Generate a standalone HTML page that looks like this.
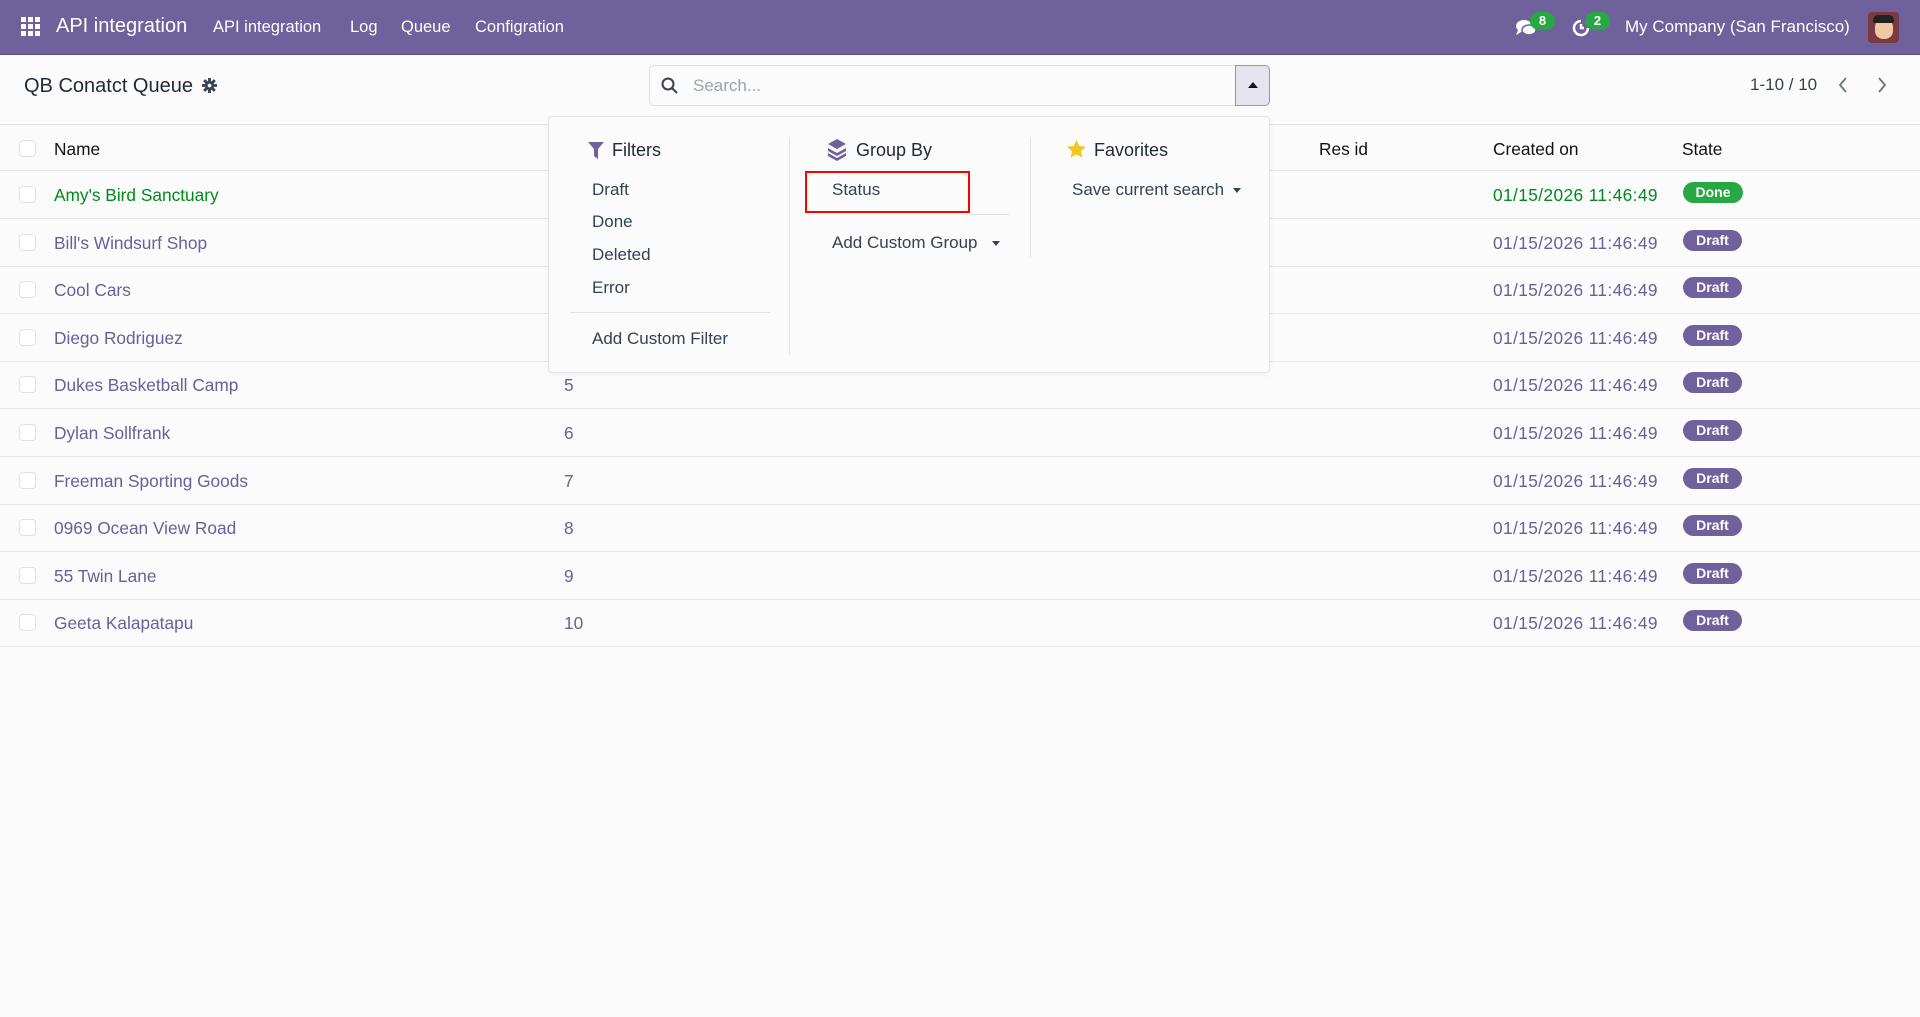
<!DOCTYPE html>
<html><head><meta charset="utf-8"><style>
*{box-sizing:border-box;margin:0;padding:0}
body{width:1920px;height:1017px;background:#fbfbfc;font-family:"Liberation Sans",sans-serif;color:#374151;position:relative;overflow:hidden}
.a{position:absolute;white-space:nowrap}
.nav{position:absolute;left:0;top:0;width:1920px;height:55px;background:#6f619b;border-bottom:1px solid #5c4f85}
.nav .a{color:#fff;font-size:16.5px;top:18px}
.row{position:absolute;left:0;width:1920px;height:48px;border-bottom:1px solid #e5e5ea;font-size:17.3px}
.row .a{top:14px}
.dt{letter-spacing:0.4px}
.cb{position:absolute;left:19px;top:15px;width:17px;height:17px;border:1px solid #e2e2e6;border-radius:4px;background:#fff}
.pu{color:#6b5e9a}
.gr{color:#008a1c}
.badge{position:absolute;left:1683px;top:11px;height:21px;border-radius:11px;color:#fff;font-size:14px;font-weight:bold;line-height:21px;text-align:center}
.dd{position:absolute;left:548px;top:116px;width:722px;height:257px;background:#fbfbfc;border:1px solid #e4e4e8;border-radius:4px;box-shadow:0 2px 6px rgba(0,0,0,.05)}
.dd .a{font-size:17px;color:#374151}
.bd{position:absolute;background:#e4e4e8}
</style></head><body>
<div class="nav">
<svg class="a" style="left:21px;top:17px" width="19" height="19" viewBox="0 0 19 19" fill="#fff"><rect x="0" y="0" width="5" height="5"/><rect x="7" y="0" width="5" height="5"/><rect x="14" y="0" width="5" height="5"/><rect x="0" y="7" width="5" height="5"/><rect x="7" y="7" width="5" height="5"/><rect x="14" y="7" width="5" height="5"/><rect x="0" y="14" width="5" height="5"/><rect x="7" y="14" width="5" height="5"/><rect x="14" y="14" width="5" height="5"/></svg>
<div class="a" style="left:56px;top:15px;font-size:20px">API integration</div>
<div class="a" style="left:213px">API integration</div>
<div class="a" style="left:350px">Log</div>
<div class="a" style="left:401px">Queue</div>
<div class="a" style="left:475px">Configration</div>
<svg class="a" style="left:1515px;top:18px" width="22" height="20" viewBox="0 0 22 20" fill="#fff"><ellipse cx="9" cy="8" rx="8" ry="6"/><path d="M3 12 L1 17 L8 13Z"/><ellipse cx="14" cy="12" rx="7" ry="5" fill="#fff" stroke="#6f619b" stroke-width="1.5"/></svg>
<div class="a" style="left:1530px;top:12px;background:#28a745;border-radius:10px;width:25px;height:18px;font-size:13px;font-weight:bold;text-align:center;line-height:18px">8</div>
<svg class="a" style="left:1571px;top:18px" width="20" height="20" viewBox="0 0 20 20" fill="none" stroke="#fff" stroke-width="2.5"><path d="M17 10 A7 7 0 1 1 10 3"/><path d="M10 6 V10 H13"/></svg>
<div class="a" style="left:1585px;top:12px;background:#28a745;border-radius:10px;width:25px;height:18px;font-size:13px;font-weight:bold;text-align:center;line-height:18px">2</div>
<div class="a" style="left:1625px;top:17px;font-size:17px">My Company (San Francisco)</div>
<div class="a" style="left:1868px;top:12px;width:31px;height:31px;border-radius:4px;background:#7a3a44;overflow:hidden"><div style="position:absolute;left:7px;top:7px;width:18px;height:20px;border-radius:8px;background:#f1c9a0"></div><div style="position:absolute;left:5px;top:3px;width:21px;height:8px;border-radius:5px 5px 2px 2px;background:#222"></div></div>
</div>
<div class="a" style="left:24px;top:75px;font-size:20px;color:#1f2937">QB Conatct Queue</div>
<svg class="a" style="left:202px;top:78px" width="15" height="15" viewBox="0 0 16 16" fill="#374151"><circle cx="8" cy="8" r="5"/><g stroke="#374151" stroke-width="3"><path d="M8 0v16M0 8h16M2.3 2.3l11.4 11.4M13.7 2.3L2.3 13.7"/></g><circle cx="8" cy="8" r="2" fill="#fbfbfc"/></svg>
<div class="a" style="left:649px;top:65px;width:621px;height:41px;border:1px solid #dedee3;border-radius:5px;background:#fbfbfc"></div>
<svg class="a" style="left:661px;top:77px" width="17" height="17" viewBox="0 0 17 17" fill="none" stroke="#374151" stroke-width="2"><circle cx="7" cy="7" r="5.5"/><path d="M11 11l5 5"/></svg>
<div class="a" style="left:693px;top:76px;font-size:17px;color:#9ca3af">Search...</div>
<div class="a" style="left:1235px;top:65px;width:35px;height:41px;background:#e5e3ee;border:1px solid #9a93b8;border-radius:0 5px 5px 0"></div>
<div class="a" style="left:1248px;top:82px;width:0;height:0;border-left:5px solid transparent;border-right:5px solid transparent;border-bottom:6px solid #111"></div>
<div class="a" style="left:1750px;top:75px;font-size:17px;color:#374151">1-10 / 10</div>
<svg class="a" style="left:1837px;top:76px" width="12" height="18" viewBox="0 0 12 18" fill="none" stroke="#6b7280" stroke-width="1.8"><path d="M9 2L3 9l6 7"/></svg>
<svg class="a" style="left:1876px;top:76px" width="12" height="18" viewBox="0 0 12 18" fill="none" stroke="#6b7280" stroke-width="1.8"><path d="M3 2l6 7-6 7"/></svg>
<div class="bd" style="left:0;top:124px;width:1920px;height:1px"></div>
<div class="row" style="top:125px;height:46px"><div class="cb"></div><div class="a" style="left:54px;color:#111;font-weight:500">Name</div><div class="a" style="left:1319px;color:#111">Res id</div><div class="a" style="left:1493px;color:#111">Created on</div><div class="a" style="left:1682px;color:#111">State</div></div>
<div class="row" style="top:171px"><div class="cb"></div><div class="a gr" style="left:54px">Amy's Bird Sanctuary</div><div class="a gr" style="left:564px">1</div><div class="a gr dt" style="left:1493px">01/15/2026 11:46:49</div><div class="badge" style="background:#28a745;width:60px">Done</div></div>
<div class="row" style="top:218.6px"><div class="cb"></div><div class="a pu" style="left:54px">Bill's Windsurf Shop</div><div class="a pu" style="left:564px">2</div><div class="a pu dt" style="left:1493px">01/15/2026 11:46:49</div><div class="badge" style="background:#6f619b;width:59px">Draft</div></div>
<div class="row" style="top:266.2px"><div class="cb"></div><div class="a pu" style="left:54px">Cool Cars</div><div class="a pu" style="left:564px">3</div><div class="a pu dt" style="left:1493px">01/15/2026 11:46:49</div><div class="badge" style="background:#6f619b;width:59px">Draft</div></div>
<div class="row" style="top:313.8px"><div class="cb"></div><div class="a pu" style="left:54px">Diego Rodriguez</div><div class="a pu" style="left:564px">4</div><div class="a pu dt" style="left:1493px">01/15/2026 11:46:49</div><div class="badge" style="background:#6f619b;width:59px">Draft</div></div>
<div class="row" style="top:361.4px"><div class="cb"></div><div class="a pu" style="left:54px">Dukes Basketball Camp</div><div class="a pu" style="left:564px">5</div><div class="a pu dt" style="left:1493px">01/15/2026 11:46:49</div><div class="badge" style="background:#6f619b;width:59px">Draft</div></div>
<div class="row" style="top:409px"><div class="cb"></div><div class="a pu" style="left:54px">Dylan Sollfrank</div><div class="a pu" style="left:564px">6</div><div class="a pu dt" style="left:1493px">01/15/2026 11:46:49</div><div class="badge" style="background:#6f619b;width:59px">Draft</div></div>
<div class="row" style="top:456.6px"><div class="cb"></div><div class="a pu" style="left:54px">Freeman Sporting Goods</div><div class="a pu" style="left:564px">7</div><div class="a pu dt" style="left:1493px">01/15/2026 11:46:49</div><div class="badge" style="background:#6f619b;width:59px">Draft</div></div>
<div class="row" style="top:504.2px"><div class="cb"></div><div class="a pu" style="left:54px">0969 Ocean View Road</div><div class="a pu" style="left:564px">8</div><div class="a pu dt" style="left:1493px">01/15/2026 11:46:49</div><div class="badge" style="background:#6f619b;width:59px">Draft</div></div>
<div class="row" style="top:551.8px"><div class="cb"></div><div class="a pu" style="left:54px">55 Twin Lane</div><div class="a pu" style="left:564px">9</div><div class="a pu dt" style="left:1493px">01/15/2026 11:46:49</div><div class="badge" style="background:#6f619b;width:59px">Draft</div></div>
<div class="row" style="top:599.4px"><div class="cb"></div><div class="a pu" style="left:54px">Geeta Kalapatapu</div><div class="a pu" style="left:564px">10</div><div class="a pu dt" style="left:1493px">01/15/2026 11:46:49</div><div class="badge" style="background:#6f619b;width:59px">Draft</div></div>

<div class="dd">
<svg class="a" style="left:39px;top:25px" width="16" height="17" viewBox="0 0 16 17" fill="#6f619b"><path d="M0 0h16L10 7v10L6 14V7Z"/></svg>
<div class="a" style="left:63px;top:23px;font-size:18px;color:#1f2937">Filters</div>
<div class="a" style="left:43px;top:63px">Draft</div>
<div class="a" style="left:43px;top:95px">Done</div>
<div class="a" style="left:43px;top:128px">Deleted</div>
<div class="a" style="left:43px;top:161px">Error</div>
<div class="bd" style="left:21px;top:195px;width:200px;height:1px"></div>
<div class="a" style="left:43px;top:212px">Add Custom Filter</div>
<div class="bd" style="left:240px;top:20px;width:1px;height:218px"></div>
<svg class="a" style="left:278px;top:22px" width="20" height="22" viewBox="0 0 20 22" fill="#6f619b"><path d="M10 0L19 5 10 10 1 5Z"/><path d="M1 9l9 5 9-5v3l-9 5-9-5Z"/><path d="M1 14l9 5 9-5v3l-9 5-9-5Z"/></svg>
<div class="a" style="left:307px;top:23px;font-size:18px;color:#1f2937">Group By</div>
<div class="a" style="left:283px;top:63px">Status</div>
<div class="a" style="left:256px;top:54px;width:165px;height:42px;border:2px solid #f00"></div>
<div class="bd" style="left:421px;top:97px;width:39px;height:1px"></div>
<div class="a" style="left:283px;top:116px">Add Custom Group</div>
<div class="a" style="left:443px;top:124px;border-left:4px solid transparent;border-right:4px solid transparent;border-top:5px solid #374151"></div>
<div class="bd" style="left:481px;top:20px;width:1px;height:120px"></div>
<svg class="a" style="left:518px;top:23px" width="19" height="18" viewBox="0 0 24 23" fill="#f3c623"><path d="M12 0l3.6 7.6 8.4 1-6.2 5.8 1.6 8.3L12 18.6 4.6 22.7l1.6-8.3L0 8.6l8.4-1Z"/></svg>
<div class="a" style="left:545px;top:23px;font-size:18px;color:#1f2937">Favorites</div>
<div class="a" style="left:523px;top:63px">Save current search</div>
<div class="a" style="left:684px;top:71px;border-left:4px solid transparent;border-right:4px solid transparent;border-top:5px solid #374151"></div>
</div>
</body></html>
